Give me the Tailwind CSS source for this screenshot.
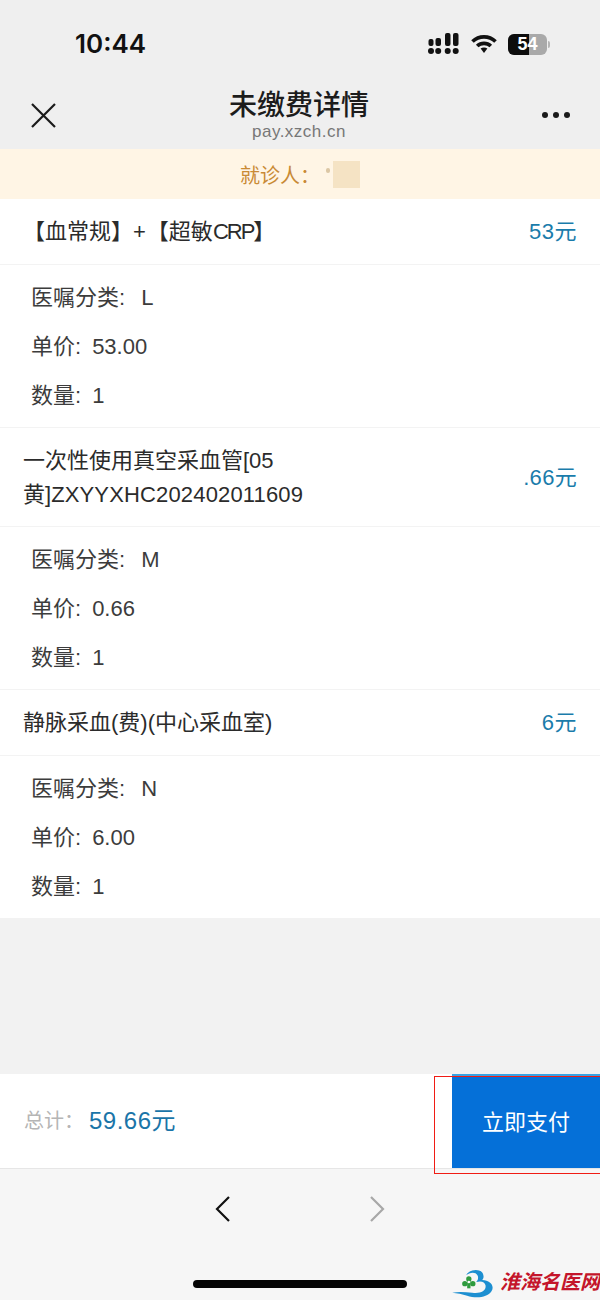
<!DOCTYPE html>
<html lang="zh-CN">
<head>
    <meta charset="UTF-8">
    <meta name="viewport" content="width=device-width, initial-scale=1.0">
    <title>未缴费详情</title>
    <script src="https://cdn.jsdelivr.net/npm/@tailwindcss/browser@4"></script>
</head>
<body class="bg-[#f2f2f2] font-['Liberation_Sans','Noto_Sans_CJK_SC',sans-serif]">
<div class="relative w-[600px] h-[1300px] overflow-hidden flex flex-col">

    <!-- Status bar -->
    <div class="h-[86px] shrink-0 bg-[#efefef] flex items-start justify-between pt-[27px] pl-[75px] pr-[50px]">
        <span class="text-[26px] leading-[34px] font-semibold text-[#111] font-['Inter',sans-serif]">10:44</span>
        <div class="flex items-center gap-[11px] mt-[6px]">
            <svg width="32" height="22" viewBox="0 0 32 22" fill="#111">
                <rect x="0.5" y="6" width="5" height="7" rx="2"/><rect x="7.5" y="5" width="5.5" height="8" rx="2"/><rect x="17" y="0" width="5.5" height="13" rx="2"/><rect x="25" y="0" width="5.5" height="13" rx="2"/>
                <circle cx="3" cy="18" r="3"/><circle cx="10.2" cy="18" r="3"/><circle cx="19.7" cy="18" r="3"/><circle cx="27.7" cy="18" r="3"/>
            </svg>
            <svg width="26" height="20" viewBox="0 0 26 20" fill="none" stroke="#111" stroke-width="3.7">
                <path d="M1.5 7.5C8 1.2 18 1.2 24.5 7.5"/><path d="M6.2 12C10 8.4 16 8.4 19.8 12"/>
                <path d="M9.6 14.6L13 19L16.4 14.6C14.5 13 11.5 13 9.6 14.6Z" fill="#111" stroke="none"/>
            </svg>
            <div class="flex items-center">
                <div class="relative w-[39px] h-[21px] rounded-[6px] overflow-hidden bg-[#a9a9a9] flex items-center justify-center">
                    <div class="absolute left-0 top-0 h-full w-[21px] bg-[#0d0d0d]"></div>
                    <span class="relative text-[18px] leading-none font-bold text-white">54</span>
                </div>
                <div class="w-[2px] h-[7px] ml-px rounded-r bg-[#b5b5b5]"></div>
            </div>
        </div>
    </div>

    <!-- Title bar -->
    <div class="h-[63px] shrink-0 bg-[#efefef] flex items-start justify-between pl-[31px] pr-[30px]">
        <svg class="mt-[17px]" width="25" height="25" viewBox="0 0 25 25" fill="none" stroke="#1a1a1a" stroke-width="2.2">
            <path d="M1 1L24 24M24 1L1 24"/>
        </svg>
        <div class="flex flex-col items-center mt-[4px]">
            <span class="text-[28px] leading-[32px] font-medium text-[#1c1c1c]">未缴费详情</span>
            <span class="text-[17px] leading-[20px] tracking-[0.5px] text-[#777]">pay.xzch.cn</span>
        </div>
        <div class="flex gap-[5px] mt-[26px]">
            <div class="w-[6px] h-[6px] rounded-full bg-[#1a1a1a]"></div>
            <div class="w-[6px] h-[6px] rounded-full bg-[#1a1a1a]"></div>
            <div class="w-[6px] h-[6px] rounded-full bg-[#1a1a1a]"></div>
        </div>
    </div>

    <!-- Patient banner -->
    <div class="h-[50px] shrink-0 bg-[#fff5e5] flex items-center pl-[240px]">
        <span class="text-[20px] text-[#c98a35] w-[88px] pt-[3px]">就诊人：</span>
        <span class="w-[4px] h-[5px] -ml-[2px] bg-[#dcc7a5] rounded-full mb-[8px]"></span>
        <div class="w-[27px] h-[27px] ml-[3px] bg-[#f5e3c4]"></div>
    </div>

    <!-- Fee items -->
    <div class="bg-white text-[#3c3c3c] text-[22px]">
        <div class="h-[66px] pb-px flex items-center justify-between px-[23px] border-b border-[#f3f3f3]">
            <span class="text-[#2b2b2b]">【血常规】+<span class="ml-px">【超敏</span><span class="tracking-[-2px]">CRP</span>】</span>
            <span class="text-[#1a7cab] tracking-[0.5px]">53元</span>
        </div>
        <div class="h-[163px] pt-[8px] pl-[31px] border-b border-[#f3f3f3]">
            <p class="h-[49px] leading-[49px]"><span class="mr-[16px]">医嘱分类:</span>L</p>
            <p class="h-[49px] leading-[49px]"><span class="mr-[11px]">单价:</span>53.00</p>
            <p class="h-[49px] leading-[49px]"><span class="mr-[11px]">数量:</span>1</p>
        </div>

        <div class="h-[99px] flex items-center justify-between px-[23px] border-b border-[#f3f3f3]">
            <span class="leading-[34px] text-[#2b2b2b] pt-[2px]">一次性使用真空采血管[05<br>黄]<span class="tracking-[0.15px]">ZXYYXHC202402011609</span></span>
            <span class="text-[#1a7cab] tracking-[0.3px]">.66元</span>
        </div>
        <div class="h-[163px] pt-[8px] pl-[31px] border-b border-[#f3f3f3]">
            <p class="h-[49px] leading-[49px]"><span class="mr-[16px]">医嘱分类:</span>M</p>
            <p class="h-[49px] leading-[49px]"><span class="mr-[11px]">单价:</span>0.66</p>
            <p class="h-[49px] leading-[49px]"><span class="mr-[11px]">数量:</span>1</p>
        </div>

        <div class="h-[66px] flex items-center justify-between px-[23px] border-b border-[#f3f3f3]">
            <span class="text-[#2b2b2b]">静脉采血(费)(中心采血室)</span>
            <span class="text-[#1a7cab] tracking-[0.5px]">6元</span>
        </div>
        <div class="h-[162px] pt-[8px] pl-[31px]">
            <p class="h-[49px] leading-[49px]"><span class="mr-[16px]">医嘱分类:</span>N</p>
            <p class="h-[49px] leading-[49px]"><span class="mr-[11px]">单价:</span>6.00</p>
            <p class="h-[49px] leading-[49px]"><span class="mr-[11px]">数量:</span>1</p>
        </div>
    </div>

    <div class="flex-1"></div>

    <!-- Total + pay -->
    <div class="h-[95px] shrink-0 bg-white border-b border-[#e6e6e6] flex items-stretch justify-between">
        <div class="flex items-center pl-[24px]">
            <span class="text-[20px] text-[#b5b5b5] w-[65px]">总计：</span>
            <span class="text-[24px] text-[#1a75a8] tracking-[0.5px]">59.66元</span>
        </div>
        <div class="w-[148px] bg-[#0570d8] border-t-2 border-[#39a3e3] flex items-center justify-center text-[22px] text-white">立即支付</div>
    </div>

    <!-- Browser nav -->
    <div class="h-[131px] shrink-0 bg-[#f6f6f6] flex flex-col items-center">
        <div class="flex gap-[140px] mt-[27px]">
            <svg width="15" height="26" viewBox="0 0 15 26" fill="none" stroke="#111" stroke-width="2.2"><path d="M14 1L2 13L14 25"/></svg>
            <svg width="15" height="26" viewBox="0 0 15 26" fill="none" stroke="#a8a8a8" stroke-width="2.2"><path d="M1 1L13 13L1 25"/></svg>
        </div>
        <div class="w-[214px] h-[8px] mt-[58px] rounded-full bg-[#050505]"></div>
    </div>

    <!-- Red annotation box over the pay button -->
    <div class="absolute left-[434px] top-[1076px] w-[170px] h-[98px] border border-[#f01c14]"></div>

    <!-- Watermark -->
    <div class="absolute left-[452px] top-[1268px] flex items-start">
        <svg class="w-[42px] h-[30px]" viewBox="0 0 125 90">
            <path d="M42 22C50 2 92 -2 94 24C95 30 92 34 90 36C115 36 128 55 118 70C105 90 70 92 45 83C30 78 15 75 0 74C20 70 40 72 60 74C85 78 103 68 100 52C98 42 88 38 72 42C80 34 80 22 70 16C60 12 50 16 42 22Z" fill="#1d8fd1"/>
            <circle cx="50" cy="33" r="8" fill="#2e9b3e"/><circle cx="38" cy="47" r="8" fill="#2e9b3e"/><circle cx="62" cy="47" r="8" fill="#2e9b3e"/>
            <rect x="45" y="36" width="10" height="25" fill="#2e9b3e"/>
            <circle cx="50" cy="42" r="4" fill="#fff"/>
        </svg>
        <span class="text-[20px] leading-none font-bold italic text-[#c4152b] ml-[6px] mt-[3px] font-['Noto_Sans_CJK_SC',sans-serif]">淮海名医网</span>
    </div>
</div>
</body>
</html>
